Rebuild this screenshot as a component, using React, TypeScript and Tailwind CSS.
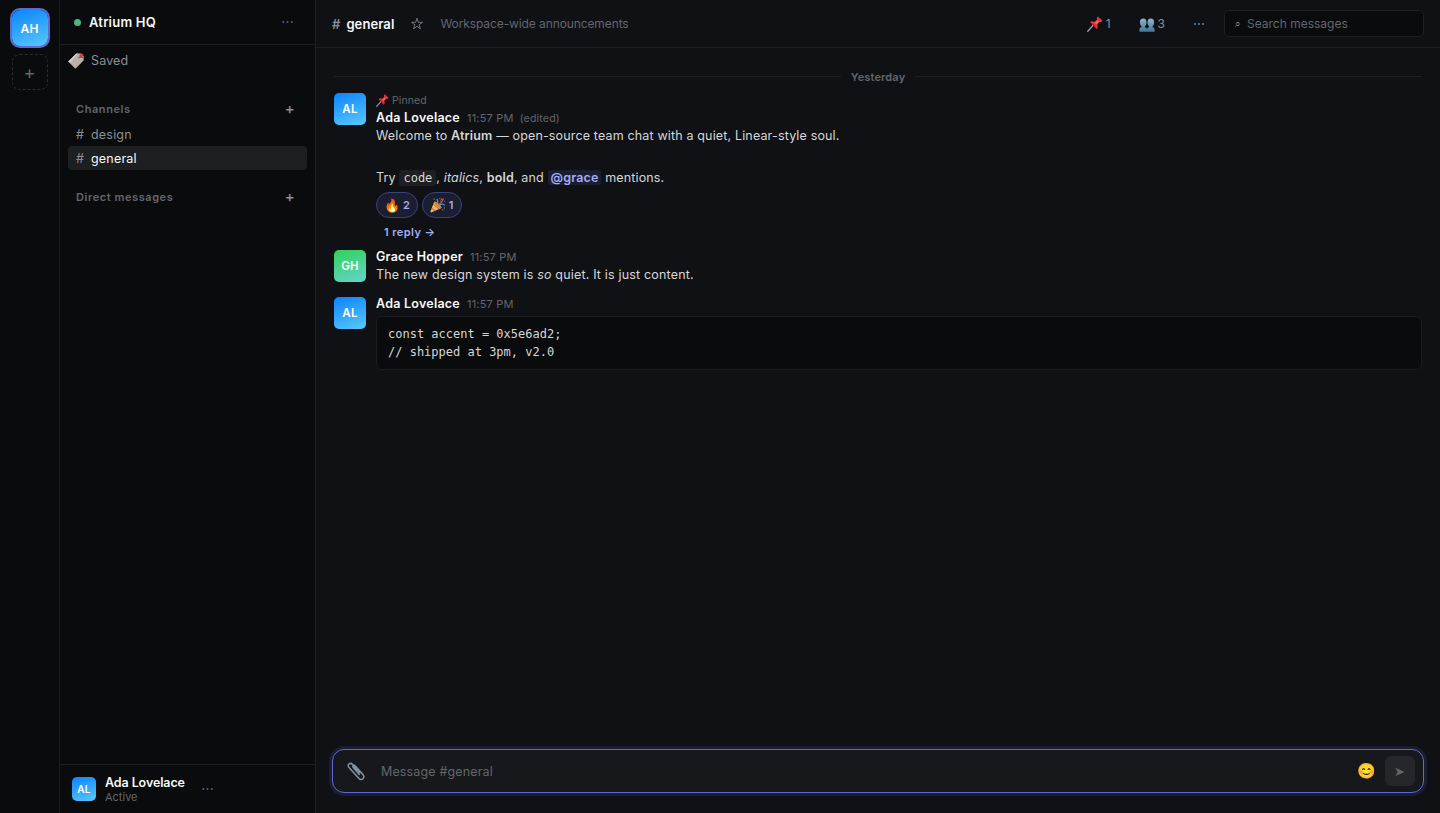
import type { ReactNode } from "react";
import clsx from "clsx";

const BLUE = "bg-linear-[160deg] from-[#0a84ff] to-[#5ac8fa]";
const GREEN = "bg-linear-[160deg] from-[#30d158] to-[#66d4cf]";

function TagIcon() {
  return (
    <svg className="size-4 shrink-0" viewBox="0 0 16 16">
      <path d="M0.2 8.4 8.4 0.6h4.8l2.4 2.6v4.2L7.4 15.8z" fill="#b9b1a9" />
      <path d="M0.2 8.4 8.4 0.6h1.4L2 9.9z" fill="#d6d0c9" />
      <path d="M10.6 4.8c1.7-.3 3.2-1.700 4.300-3.600M12.200 1.200l.5 2.900 3 .1" stroke="#c93a3c" strokeWidth="1.4" fill="none" />
    </svg>
  );
}

function PinIcon({ className }: { className: string }) {
  return (
    <svg className={clsx("shrink-0", className)} viewBox="0 0 16 16">
      <path d="M0.8 15.2 6.6 8.8" stroke="#8b98a3" strokeWidth="1.5" strokeLinecap="round" />
      <path d="M3 6c1.5-1.2 3.2-1 4.5-.2l2.6-2.2c-.5-1.4-.2-2.6.9-3.200l4.600 4.400c-.7 1.200-1.900 1.500-3.200 1.100L10.200 8.700c.8 1.500.7 3.200-.4 4.600z" fill="#e0343a" />
      <path d="M7.7 6.8 10.8 4.2l1.2 1.1L9.3 8.3z" fill="#f26a64" />
      <path d="M3 6c3 1 5.8 3.7 6.8 7.3z" fill="#b3202a" />
    </svg>
  );
}

function PeopleIcon() {
  return (
    <svg className="mt-px h-[14px] w-4 shrink-0" viewBox="0 0 16 14">
      <defs>
        <linearGradient id="people" x1="0" y1="0" x2="0" y2="1">
          <stop offset="0" stopColor="#8fb6d0" />
          <stop offset="1" stopColor="#46749b" />
        </linearGradient>
      </defs>
      <g fill="url(#people)">
        <path d="M4.2.4c2.200 0 3.300 1.500 3.300 3.800 0 1.900-.7 3.400-1.600 4.100v1c1.300.3 2.100 1 2.100 2.700v1.800H.4V12c0-1.700.8-2.400 2.100-2.700v-1C1.600 7.600.9 6.100.9 4.200.9 1.900 2 .4 4.200.4z" />
        <path d="M11.8.4c2.200 0 3.300 1.500 3.300 3.800 0 1.900-.7 3.400-1.600 4.100v1c1.300.3 2.100 1 2.100 2.700v1.800H8V12c0-1.700.8-2.400 2.100-2.700v-1C9.200 7.600 8.500 6.100 8.500 4.200 8.500 1.900 9.600.4 11.800.4z" />
      </g>
    </svg>
  );
}

function PartyIcon() {
  return (
    <svg className="size-4" viewBox="0 0 16 16" fill="none">
      <path d="M4.2 4.8 11.4 11 1.2 15.4c-.6.2-.9-.2-.7-.8z" fill="#f3bd3c" />
      <path d="M3.4 7.4 9.2 12M1.9 11.4l3.3 2.4" stroke="#a8559b" strokeWidth="1" />
      <ellipse cx="7.8" cy="7.9" rx="1.5" ry="4.8" transform="rotate(-49 7.8 7.9)" fill="#c78b2b" />
      <path d="M7.2 6.6c1-1.5.8-3-.5-4.7M9.5 8c1.9-1.3 3.5-1.3 5.3.4" stroke="#4f8fd8" strokeWidth="1.3" />
      <path d="M8.8 7.2C11 6.2 12.6 4.4 13.4 1.4" stroke="#cf4c60" strokeWidth="1.2" />
      <path d="M3.5 1.6l1 1M9.6 1l.3 1.2M14.2 4.5l1-.3M12.5 12.3l.7 1.2M10.2 3.7l.8.5" stroke="#cf4c60" strokeWidth="1.1" />
      <path d="M11.6 1.7l-.4 1M14.9 11.3l-1-.5" stroke="#5bb46a" strokeWidth="1.1" />
    </svg>
  );
}

function PaperclipIcon() {
  return (
    <svg className="size-5 shrink-0" viewBox="0 0 20 20" fill="none" strokeLinecap="round">
      <path
        d="M13.3 12.6 7.3 5.6C6 4.2 8 2.6 9.3 4l7.6 8.7c2.7 3.2-1.3 6.7-4.1 3.6L3.2 5.9C.4 2.6 4 .2 6.5 2.5l7.3 8.1"
        transform="translate(0 .9)"
        stroke="#8494a3"
        strokeWidth="1.5"
      />
    </svg>
  );
}

function StarIcon() {
  return (
    <svg className="size-[14px] shrink-0" viewBox="0 0 14 14" fill="none" stroke="#7c8088" strokeWidth="0.9">
      <path d="M7 1.3 8.3 5.3h4.2L9.1 7.8l1.3 4L7 9.3l-3.4 2.5 1.3-4L1.5 5.3h4.2z" />
    </svg>
  );
}

function Avatar({ initials, className }: { initials: string; className: string }) {
  return (
    <div className={clsx("flex shrink-0 items-center justify-center font-semibold text-white", className)}>
      {initials}
    </div>
  );
}

function SectionHeader({ title }: { title: string }) {
  return (
    <div className="flex h-6 items-center justify-between pl-2 pr-3">
      <span className="text-[11px] font-semibold tracking-[0.57px] text-[#62666d]">{title}</span>
      <button className="pb-px text-[15px] leading-none font-medium text-[#8a8f98]">+</button>
    </div>
  );
}

function Channel({ name, active }: { name: string; active?: boolean }) {
  return (
    <div
      className={clsx(
        "flex h-6 items-center rounded px-2 pt-0.5",
        active ? "bg-[#1e1f21] text-[#f7f8f8]" : "text-[#8a8f98]"
      )}
    >
      <span className="w-[15px] text-[#8a8f98]">#</span>
      <span>{name}</span>
    </div>
  );
}

function Reaction({ emoji, count }: { emoji: ReactNode; count: number }) {
  return (
    <button className="flex h-[26px] items-center gap-[3px] rounded-full border border-[#3b4279] bg-[#1b1e30] px-[7px] text-[11px] font-semibold text-[#a4adf5]">
      <span className="w-4 text-[13px] leading-none">{emoji}</span>
      <span className="pt-px">{count}</span>
    </button>
  );
}

type MessageProps = {
  author: string;
  initials: string;
  color: string;
  pinned?: boolean;
  edited?: boolean;
  children: ReactNode;
};

function Message({ author, initials, color, pinned, edited, children }: MessageProps) {
  return (
    <article className="flex gap-2.5 px-[18px] py-1.5">
      <Avatar initials={initials} className={clsx("size-8 rounded-[5px] pt-0.5 text-[11.5px] tracking-[0.2px]", color)} />
      <div className="min-w-0 flex-1">
        {pinned && (
          <div className="flex h-[18px] items-start gap-[3px] text-[10.5px] leading-[15px] tracking-[0.1px] text-[#62666d]">
            <PinIcon className="mt-px size-[13px]" />
            <span>Pinned</span>
          </div>
        )}
        <div className="flex h-3.5 items-center">
          <span className="font-semibold tracking-[0.24px] text-[#f7f8f8]">{author}</span>
          <span className="ml-[7px] pt-px text-[11px] tracking-[0.2px] text-[#62666d]">11:57 PM</span>
          {edited && (
            <span className="ml-1.5 pt-px text-[10.5px] tracking-[0.2px] text-[#62666d]">(edited)</span>
          )}
        </div>
        {children}
      </div>
    </article>
  );
}

export default function App() {
  return (
    <div className="flex h-screen overflow-hidden bg-[#101114] font-['Inter',sans-serif] text-[12.5px] leading-[1.5] tracking-[0.2px] text-[#d6d7d9] antialiased">
      {/* Workspaces */}
      <nav className="flex w-[60px] shrink-0 flex-col items-center gap-2 border-r border-[#1b1c1f] bg-[#0a0b0c] pt-2.5">
        <Avatar
          initials="AH"
          className={clsx("size-9 rounded-lg pt-0.5 text-xs ring-2 ring-[#5e6ad2]", BLUE)}
        />
        <button className="size-9 rounded-lg border border-dashed border-[#2b2d31] pt-0.5 text-lg leading-none text-[#62666d]">
          +
        </button>
      </nav>

      {/* Sidebar */}
      <aside className="flex w-64 shrink-0 flex-col border-r border-[#1f2023] bg-[#0a0b0c]">
        <header className="flex h-[45px] items-center border-b border-[#1f2023] pr-[21px] pl-3.5">
          <span className="size-[7px] rounded-full bg-[#4cb782]" />
          <span className="ml-2 flex-1 pt-0.5 text-[13px] font-semibold tracking-[0.2px] text-[#f7f8f8]">Atrium HQ</span>
          <span className="text-[13px] text-[#62666d]">⋯</span>
        </header>

        <div className="flex-1 px-2">
          <div className="flex h-8 items-center gap-[7px] text-[#8a8f98]">
            <TagIcon />
            <span className="tracking-[0.15px]">Saved</span>
          </div>
          <div className="mt-5">
            <SectionHeader title="Channels" />
            <div className="pt-px">
              <Channel name="design" />
              <Channel name="general" active />
            </div>
          </div>
          <div className="mt-[15px]">
            <SectionHeader title="Direct messages" />
          </div>
        </div>

        <footer className="flex h-[49px] items-center border-t border-[#1f2023] px-3">
          <Avatar initials="AL" className={clsx("size-6 rounded-[5px] pt-px text-[10px]", BLUE)} />
          <div className="ml-[9px]">
            <div className="leading-[15px] font-semibold tracking-[-0.1px] text-[#f7f8f8]">Ada Lovelace</div>
            <div className="text-[11px] leading-[14px] tracking-normal text-[#62666d]">Active</div>
          </div>
          <span className="ml-4 text-[13px] text-[#62666d]">⋯</span>
        </footer>
      </aside>

      <main className="flex min-w-0 flex-1 flex-col">
        {/* Channel header */}
        <header className="flex h-12 shrink-0 items-center border-b border-[#1f2023] px-4 tracking-normal">
          <span className="pt-0.5 text-[13px] font-semibold text-[#8a8f98]">#</span>
          <h1 className="ml-1.5 pt-0.5 text-[13px] font-semibold tracking-[0.1px] text-[#f7f8f8]">general</h1>
          <span className="ml-4">
            <StarIcon />
          </span>
          <span className="ml-4 flex-1 text-xs tracking-[-0.1px] text-[#62666d]">Workspace-wide announcements</span>
          <span className="flex items-center gap-[3px] text-xs text-[#8a8f98]">
            <PinIcon className="mt-px size-4" />1
          </span>
          <span className="ml-7 flex items-center gap-[3px] pt-px text-xs text-[#8a8f98]">
            <PeopleIcon />3
          </span>
          <span className="ml-7 text-xs text-[#8a8f98]">⋯</span>
          <div className="ml-[19px] flex h-[27px] w-[200px] items-center rounded-[5px] border border-[#1f2023] bg-[#0a0b0c] px-2.5 text-xs text-[#62666d]">
            <span className="w-3 text-[10px] text-[#8a8f98]">⌕</span>
            <span>Search messages</span>
          </div>
        </header>

        {/* Messages */}
        <section className="flex-1">
          <div className="mt-[19px] flex h-5 items-center gap-2.5 px-[18px]">
            <div className="mb-px h-px flex-1 bg-[#1f2023]" />
            <span className="pt-px text-[11px] font-semibold tracking-[0.15px] text-[#62666d]">Yesterday</span>
            <div className="mb-px h-px flex-1 bg-[#1f2023]" />
          </div>

          <Message author="Ada Lovelace" initials="AL" color={BLUE} pinned edited>
            <div className="leading-[21px] tracking-[0.155px]">
              Welcome to <strong className="font-semibold">Atrium</strong> — open-source team chat with a quiet, Linear-style soul.
              <br />
              <br />
              Try{" "}
              <code className="rounded-[3px] bg-[#1e1f21] px-1 py-px font-['DejaVu_Sans_Mono',monospace] text-xs tracking-normal">code</code>,{" "}
              <em>italics</em>, <strong className="font-semibold">bold</strong>, and{" "}
              <span className="rounded-[3px] bg-[#1b1e30] px-[3px] font-semibold text-[#a4adf5]">@grace</span> mentions.
            </div>
            <div className="mt-1 flex gap-1 tracking-normal">
              <Reaction emoji="🔥" count={2} />
              <Reaction emoji={<PartyIcon />} count={1} />
            </div>
            <button className="mt-2 block h-3 px-2 text-[11px] leading-[12px] font-semibold tracking-[0.42px] text-[#a4adf5]">
              1 reply →
            </button>
          </Message>

          <Message author="Grace Hopper" initials="GH" color={GREEN}>
            <div className="leading-[21px] tracking-[0.18px]">
              The new design system is <em>so</em> quiet. It is just content.
            </div>
          </Message>

          <Message author="Ada Lovelace" initials="AL" color={BLUE}>
            <pre className="mt-[5px] h-[54px] rounded-md border border-[#1b1c1f] bg-[#0a0b0c] px-[11px] py-2 font-['DejaVu_Sans_Mono',monospace] text-xs leading-[18px] tracking-normal">
              {"const accent = 0x5e6ad2;\n// shipped at 3pm, v2.0"}
            </pre>
          </Message>
        </section>

        {/* Composer */}
        <div className="mx-4 mb-5 flex h-11 shrink-0 items-center rounded-xl border border-[#5e6ad2] bg-[#17181b] pr-2 pl-[13px] ring-3 ring-[#1b1e30]">
          <PaperclipIcon />
          <span className="ml-[15px] flex-1 pt-0.5 tracking-[0.14px] text-[#62666d]">Message #general</span>
          <span className="pt-px text-[15px]">😊</span>
          <button className="ml-[9px] flex size-[30px] items-center justify-center rounded-md bg-[#26272a] pt-px text-[13px] text-[#62666d]">
            ➤
          </button>
        </div>
      </main>
    </div>
  );
}
